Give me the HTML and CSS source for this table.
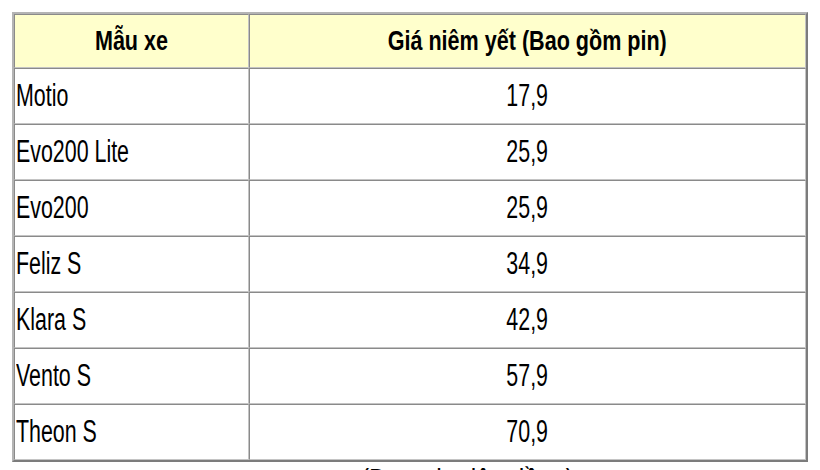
FILE: index.html
```html
<!DOCTYPE html>
<html lang="vi">
<head>
<meta charset="utf-8">
<title>Bảng giá xe</title>
<link rel="stylesheet" href="styles.css">
</head>
<body>
<table class="price">
  <thead>
    <tr>
      <th class="c1"><span class="t">Mẫu xe</span></th>
      <th class="c2"><span class="t">Giá niêm yết (Bao gồm pin)</span></th>
    </tr>
  </thead>
  <tbody>
    <tr><td class="c1"><span class="t">Motio</span></td><td class="c2"><span class="t">17,9</span></td></tr>
    <tr><td class="c1"><span class="t">Evo200 Lite</span></td><td class="c2"><span class="t">25,9</span></td></tr>
    <tr><td class="c1"><span class="t">Evo200</span></td><td class="c2"><span class="t">25,9</span></td></tr>
    <tr><td class="c1"><span class="t">Feliz S</span></td><td class="c2"><span class="t">34,9</span></td></tr>
    <tr><td class="c1"><span class="t">Klara S</span></td><td class="c2"><span class="t">42,9</span></td></tr>
    <tr><td class="c1"><span class="t">Vento S</span></td><td class="c2"><span class="t">57,9</span></td></tr>
    <tr><td class="c1"><span class="t">Theon S</span></td><td class="c2"><span class="t">70,9</span></td></tr>
  </tbody>
</table>
<p class="note"><span class="t">(Đơn vị: triệu đồng)</span></p>
</body>
</html>
```
FILE: styles.css
```css
html, body {
  margin: 0;
  padding: 0;
  background: #ffffff;
  overflow: hidden;
}
body {
  padding: 12px 0 0 12px;
  font-family: "Liberation Sans", Arial, sans-serif;
  color: #000;
}
.price {
  width: 796px;
  border-collapse: separate;
  border-spacing: 0;
  border-style: solid;
  border-width: 2px;
  border-color: #b4b4b4 #7c7c7c #7c7c7c #b4b4b4;
}
.price th,
.price td {
  padding: 0;
  border-style: solid;
  border-width: 1px;
  border-color: #8a8a8a #c4c4c4 #c4c4c4 #8a8a8a;
  vertical-align: middle;
  white-space: nowrap;
}
.price th {
  height: 52px;
  background: #ffffcc;
  font-size: 28px;
  font-weight: bold;
  text-align: center;
}
.price td {
  height: 54px;
  background: #ffffff;
  font-size: 31px;
  font-weight: normal;
}
.price .c1 {
  width: 232px;
}
.price td.c1 {
  text-align: left;
  padding-left: 1px;
}
.price td.c2 {
  text-align: center;
}
.t {
  display: inline-block;
  transform: scaleX(0.69);
  transform-origin: center center;
}
.price th .t {
  transform: scaleX(0.77);
}
.price td.c1 .t {
  transform-origin: left center;
}
.note {
  margin: 7px 0 0 0;
  width: 796px;
  padding-left: 114px;
  box-sizing: border-box;
  text-align: center;
  font-size: 31px;
  line-height: 24px;
}
.note .t {
  transform: scaleX(0.8);
}
```
